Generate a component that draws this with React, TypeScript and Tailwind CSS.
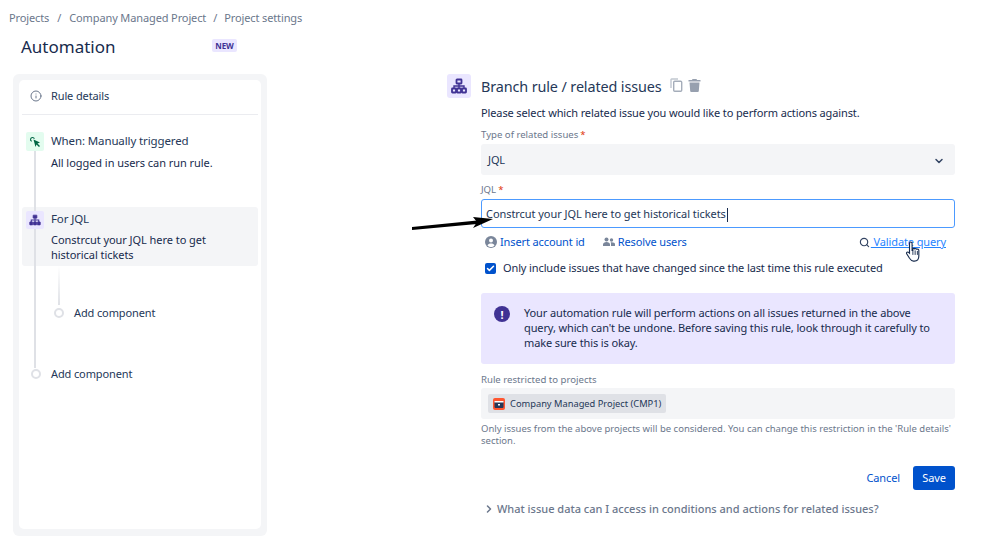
import { Check, ChevronDown, ChevronRight, Info, Search } from 'lucide-react'

function BranchIcon({ size = 14, filled = false }: { size?: number; filled?: boolean }) {
  return (
    <svg width={size} height={size} viewBox="0 0 16 16" fill={filled ? '#403294' : 'none'} stroke="#403294" strokeWidth={filled ? 1 : 1.8}>
      <rect x="5.500" y="1.500" width="5" height="4" rx="0.500" />
      <rect x="1" y="10.500" width="4" height="4" rx="0.500" />
      <rect x="6" y="10.500" width="4" height="4" rx="0.500" />
      <rect x="11" y="10.500" width="4" height="4" rx="0.500" />
      <path d="M8 5.500V10.500M3 10.500V8H13V10.500" strokeWidth="1.400" fill="none" />
    </svg>
  )
}

function Required() {
  return <span className="ml-[2px] text-[#de350b]">*</span>
}

export default function App() {
  return (
    <div className="relative h-[544px] w-[999px] overflow-hidden bg-white font-['Noto_Sans',sans-serif] text-[11px] tracking-[-0.12px] text-[#253858]">
      <div className="flex h-[27px] items-end pl-[9px] leading-[18px] text-[#6b778c]">
        <span>Projects</span>
        <span className="mx-[8px]">/</span>
        <span>Company Managed Project</span>
        <span className="mx-[7px]">/</span>
        <span>Project settings</span>
      </div>

      <div className="flex h-[47px] items-start pl-[21px]">
        <h1 className="mt-[9px] w-[191px] text-[17px] leading-[21px] tracking-normal text-[#172b4d]">Automation</h1>
        <span className="mt-[12px] flex h-[13px] w-[25px] items-center justify-center rounded-[2px] bg-[#eae6ff] text-[8px] font-bold tracking-normal text-[#403294]">
          NEW
        </span>
      </div>

      <div className="flex items-start">
        {/* rule sidebar */}
        <aside className="ml-[13px] h-[462px] w-[254px] rounded-[6px] bg-[#f4f5f7] p-[6px]">
          <div className="relative h-[449px] rounded-[5px] bg-white px-[3px]">
            <div className="flex h-[35px] items-center gap-[9px] border-b border-[#ebecf0] pb-[2px] pl-[8px]">
              <Info size={12} color="#6b778c" />
              <span>Rule details</span>
            </div>

            <div className="mt-[17px] flex gap-[7px] pl-[4px]">
              <div className="relative z-20 flex h-[19px] w-[18px] shrink-0 items-center justify-center rounded-[2px] bg-[#e3fcef]">
                <svg width="12" height="12" viewBox="0 0 12 12" fill="#006644">
                  <path d="M4.500 3.500 11 6.500 8.500 7.500 11 10 10 11 7.500 8.500 6.500 11z" />
                  <path d="M3.500 1a2.500 2.500 0 0 0-1 4.800L3 4.700a1.400 1.400 0 1 1 1.800-1.800l1.100-.4A2.500 2.500 0 0 0 3.500 1z" />
                </svg>
              </div>
              <div>
                <div className="text-[11.500px] leading-[18px]">When: Manually triggered</div>
                <div className="mt-[4px] leading-[18px] tracking-[-0.05px] text-[#172b4d]">All logged in users can run rule.</div>
              </div>
            </div>

            <div className="mt-[35px] flex h-[59px] gap-[7px] rounded-[3px] bg-[#f4f5f7] pl-[4px] pt-[3px]">
              <div className="relative z-20 mt-[1px] flex h-[18px] w-[18px] shrink-0 items-center justify-center rounded-[2px] bg-[#eae6ff]">
                <BranchIcon size={12} filled />
              </div>
              <div>
                <div className="text-[11.500px] leading-[18px]">For JQL</div>
                <div className="mt-[5px] leading-[14.500px] tracking-[-0.05px] text-[#172b4d]">
                  Constrcut your JQL here to get
                  <br />
                  historical tickets
                </div>
              </div>
            </div>

            <div className="absolute left-[15px] top-[71px] z-10 h-[217px] w-[2px] bg-[#dfe1e6]" />

            <div className="ml-[36px] h-[39px] w-[2px] bg-gradient-to-b from-white to-[#dfe1e6]" />
            <div className="ml-[32px] flex h-[16px] items-center gap-[10px]">
              <span className="h-[10px] w-[10px] rounded-full border-2 border-[#dfe1e6] bg-white" />
              <span>Add component</span>
            </div>

            <div className="relative z-20 ml-[9px] mt-[45px] flex h-[16px] items-center gap-[10px]">
              <span className="h-[10px] w-[10px] rounded-full border-2 border-[#dfe1e6] bg-white" />
              <span>Add component</span>
            </div>
          </div>
        </aside>

        {/* branch form */}
        <main className="ml-[180px] flex w-[508px] gap-[10px]">
          <div className="flex h-[24px] w-[24px] shrink-0 items-center justify-center rounded-[3px] bg-[#eae6ff]">
            <BranchIcon size={16} />
          </div>
          <div className="w-[474px]">
            <div className="flex h-[26px] items-center">
              <h2 className="text-[14.400px] leading-[26px] text-[#253858]">Branch rule / related issues</h2>
              <svg width="13" height="14" viewBox="0 0 13 14" fill="none" className="-mt-[4px] ml-[8px]">
                <path d="M1 10V1.500a.500.500 0 0 1 .500-.500H8" stroke="#c1c7d0" strokeWidth="1.400" />
                <rect x="3.700" y="3.200" width="8" height="10" rx="1" stroke="#a5adba" strokeWidth="1.400" />
              </svg>
              <svg width="13" height="14" viewBox="0 0 13 14" fill="#97a0af" className="-mt-[4px] ml-[5px]">
                <path d="M4.500 1h4l.5 1h3.500v1.500H.500V2H4zM1.500 4.500h10l-.7 8.500a1 1 0 0 1-1 1H3.200a1 1 0 0 1-1-1z" />
              </svg>
            </div>
            <p className="mt-[4px] leading-[18px] text-[#172b4d]">
              Please select which related issue you would like to perform actions against.
            </p>

            <div className="mt-[6px] text-[9.600px] leading-[14px] tracking-normal text-[#6b778c]">
              Type of related issues
              <Required />
            </div>
            <div className="mt-[2px] flex h-[31px] items-center justify-between rounded-[3px] bg-[#f4f5f7] pl-[7px] pr-[10px] pt-[2px]">
              <span>JQL</span>
              <ChevronDown size={12} strokeWidth={3} color="#344563" />
            </div>

            <div className="mt-[8px] text-[9.600px] leading-[14px] tracking-normal text-[#6b778c]">
              JQL
              <Required />
            </div>
            <div className="mt-[2px] flex h-[29px] items-center rounded-[3px] border border-[#4c9aff] pl-[4px] pt-[2px] tracking-[-0.06px]">
              <span>Constrcut your JQL here to get historical tickets</span>
              <span className="ml-[1px] h-[14px] w-px bg-[#172b4d]" />
            </div>

            <div className="mt-[5px] flex h-[18px] items-center pl-[4px] text-[#0052cc]">
              <svg width="12" height="12" viewBox="0 0 12 12">
                <circle cx="6" cy="6" r="6" fill="#7a869a" />
                <circle cx="6" cy="4.500" r="2" fill="#fff" />
                <path d="M2.500 9.500C3 8 4.500 7.500 6 7.500s3 .5 3.500 2C8.500 10.500 7.200 11 6 11s-2.500-.5-3.500-1.500z" fill="#fff" />
              </svg>
              <span className="ml-[3px]">Insert account id</span>
              <svg width="12" height="10" viewBox="0 0 12 10" fill="#7a869a" className="ml-[18px]">
                <circle cx="3.500" cy="2.500" r="2" />
                <circle cx="8.500" cy="3" r="1.700" />
                <path d="M0 9V7.500C0 6 1.500 5 3.500 5S7 6 7 7.500V9zM8 9V6.500c0-.5-.2-.8-.4-1.100C9.800 5 12 5.800 12 7.200V9z" />
              </svg>
              <span className="ml-[3px]">Resolve users</span>
              <Search size={11} strokeWidth={2.500} color="#344563" className="ml-auto" />
              <span className="ml-[1px] mr-[9px] text-[#2684ff] underline">&nbsp;Validate query</span>
            </div>

            <div className="mt-[8px] flex h-[18px] items-center pl-[4px]">
              <span className="flex h-[11px] w-[11px] items-center justify-center rounded-[2px] bg-[#0052cc]">
                <Check size={9} strokeWidth={4} color="white" />
              </span>
              <span className="ml-[7px] text-[#172b4d]">Only include issues that have changed since the last time this rule executed</span>
            </div>

            <div className="mt-[16px] flex h-[71px] rounded-[3px] bg-[#eae6ff] pl-[13px] pt-[12px]">
              <span className="mt-[1px] flex h-[16px] w-[16px] shrink-0 items-center justify-center rounded-full bg-[#403294] text-[11px] font-bold leading-none text-white">
                !
              </span>
              <p className="ml-[14px] leading-[15px] text-[#172b4d]">
                Your automation rule will perform actions on all issues returned in the above
                <br />
                query, which can't be undone. Before saving this rule, look through it carefully to
                <br />
                make sure this is okay.
              </p>
            </div>

            <div className="mt-[9px] text-[9.600px] leading-[14px] tracking-normal text-[#6b778c]">Rule restricted to projects</div>
            <div className="mt-[1px] flex h-[31px] items-center rounded-[3px] bg-[#f4f5f7] pl-[7px]">
              <div className="flex h-[19px] items-center rounded-[2px] bg-[#dfe1e6] pl-[5px] pr-[5px]">
                <svg width="12" height="12" viewBox="0 0 12 12">
                  <rect width="12" height="12" rx="2" fill="#ff5630" />
                  <rect x="1.500" y="3" width="9" height="7" rx="1" fill="#253858" />
                  <rect x="1.500" y="3" width="9" height="1.500" fill="#ffffff" />
                  <rect x="5" y="6" width="2" height="1.500" fill="#ffffff" />
                </svg>
                <span className="ml-[5px] pt-[1px] text-[9.300px] tracking-normal text-[#253858]">Company Managed Project (CMP1)</span>
              </div>
            </div>
            <p className="mt-[4px] whitespace-nowrap text-[9.500px] leading-[12px] tracking-normal text-[#6b778c]">
              Only issues from the above projects will be considered. You can change this restriction in the 'Rule details'
              <br />
              section.
            </p>

            <div className="mt-[19px] flex items-center justify-end">
              <span className="text-[#0052cc]">Cancel</span>
              <span className="ml-[13px] flex h-[24px] w-[42px] items-center justify-center rounded-[3px] bg-[#0052cc] text-white">Save</span>
            </div>

            <div className="mt-[9px] flex h-[20px] items-center pl-[2px] font-medium tracking-normal text-[#6b778c]">
              <ChevronRight size={12} strokeWidth={3} />
              <span className="ml-[2px]">What issue data can I access in conditions and actions for related issues?</span>
            </div>
          </div>
        </main>
      </div>

      {/* annotation arrow and mouse pointer over the form */}
      <svg width="90" height="24" viewBox="0 0 90 24" className="absolute left-[411px] top-[210px]">
        <path d="M1 17 66 10.500V14L1 20z" fill="#000" />
        <path d="M62 7 82 9 62 18 66 12z" fill="#000" />
      </svg>
      <svg width="18" height="23" viewBox="0 0 16 20" className="absolute left-[905px] top-[240px]">
        <path d="M5 1.500c.8 0 1.300.6 1.300 1.400V9h.7V7.500c.8-.6 1.500-.3 1.800.2.700-.5 1.500-.2 1.800.4.800-.4 1.700 0 1.700 1V14c0 2.500-1.500 4.500-4 4.500H7.500c-1.500 0-2.500-1-3.500-2.500L1.500 12c-.5-1 .8-2 1.700-1.200L4 11.500V3c0-.9.300-1.500 1-1.500z" fill="#fff" stroke="#172b4d" strokeWidth="1" />
        <path d="M7 9.500V13M9 9V13M11 9.500V13" stroke="#172b4d" strokeWidth="0.800" />
      </svg>
    </div>
  )
}
